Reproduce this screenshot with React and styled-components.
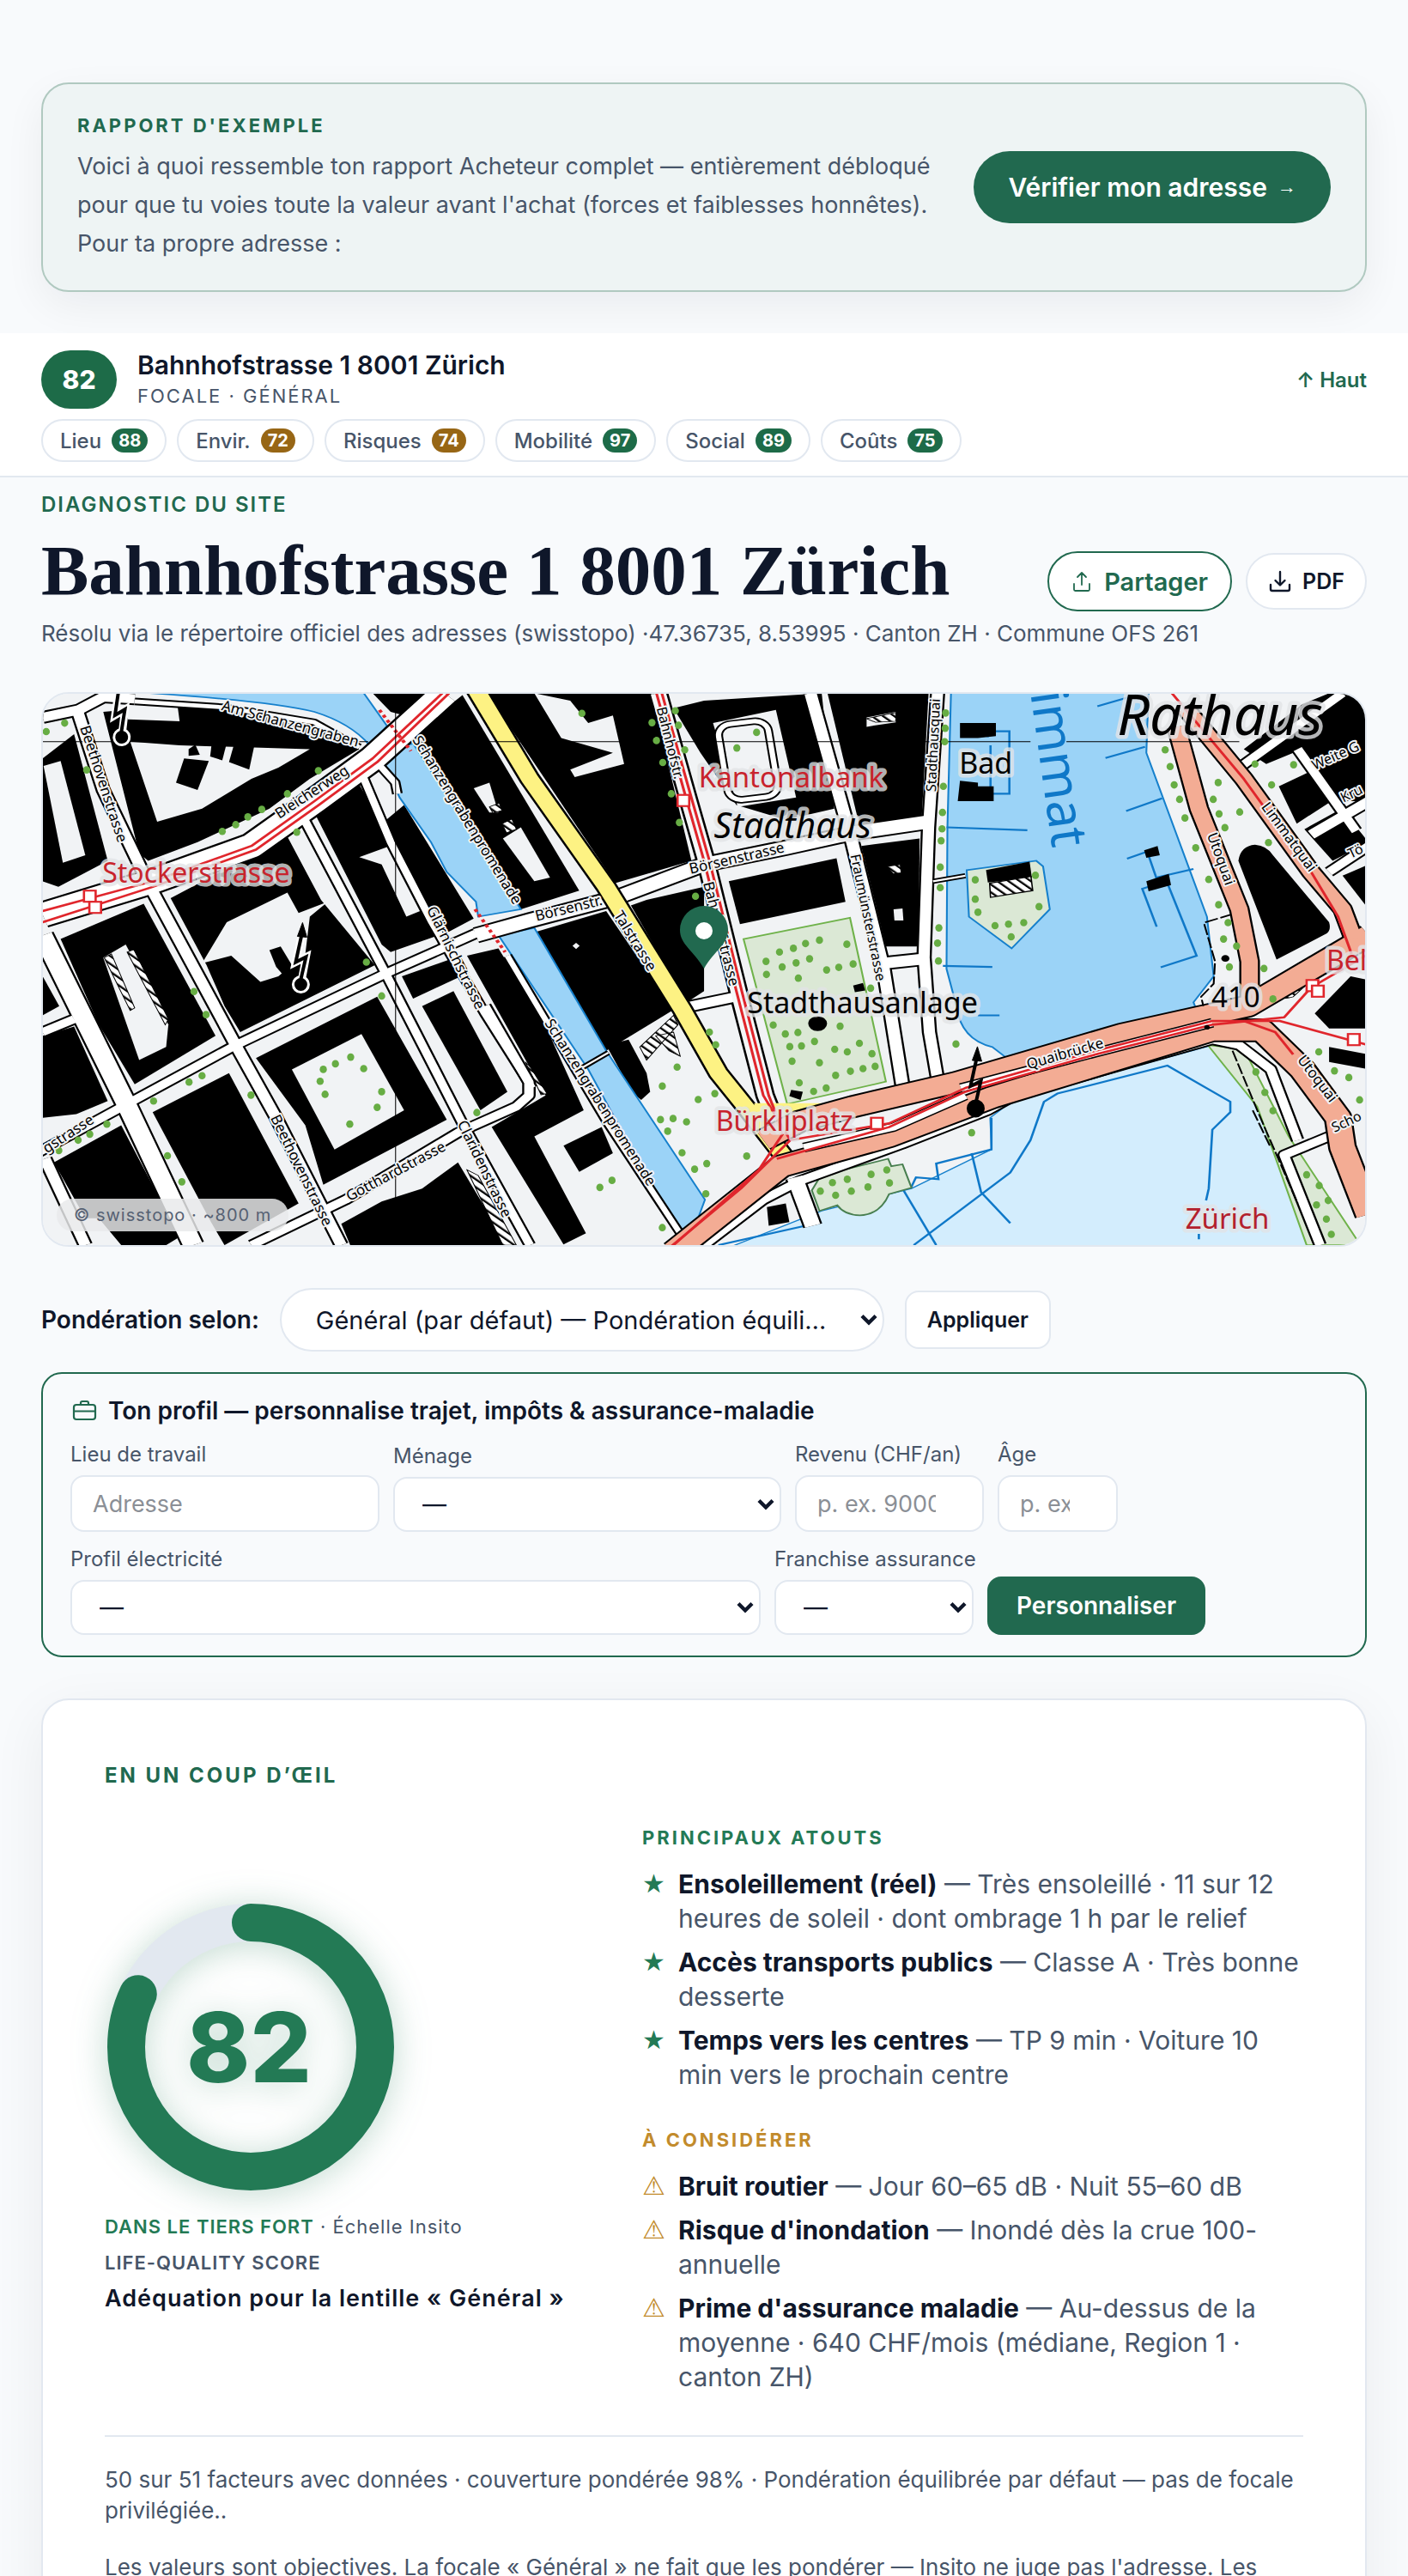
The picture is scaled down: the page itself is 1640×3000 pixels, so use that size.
import React, { useState } from "react";
import styled, { createGlobalStyle } from "styled-components";

const GlobalStyle = createGlobalStyle`
  * {
    box-sizing: border-box;
  }
  body {
    margin: 0;
    background: #f8fafc;
    color: #0f172a;
    font-family: Inter, "Liberation Sans", sans-serif;
  }
  h1, h2, h3, p, ul {
    margin: 0;
    padding: 0;
  }
  button, input, select {
    font-family: inherit;
    margin: 0;
  }
`;

const Page = styled.div`
  height: 100vh;
  overflow: hidden;
  padding-top: 96px;
`;
const Section = styled.section`
  margin: 0 48px;
`;

const Banner = styled(Section)`
  display: flex;
  align-items: center;
  justify-content: space-between;
  gap: 24px;
  padding: 32px 40px;
  border: 2px solid #b0c9c0;
  border-radius: 32px;
  background: #eef4f4;
  box-shadow: 0 16px 48px rgba(15, 23, 42, 0.06);
`;
const Eyebrow = styled.h2`
  color: ${(props) => props.$color || "#21694f"};
  font-size: ${(props) => props.$size || 22}px;
  font-weight: ${(props) => props.$weight || 700};
  line-height: 32px;
  letter-spacing: ${(props) => props.$spacing || 3}px;
  text-transform: uppercase;
`;
const BannerText = styled.p`
  margin-top: 9px;
  color: #475569;
  font-size: 27px;
  line-height: 45px;
`;
const BannerLink = styled.a`
  display: flex;
  flex-shrink: 0;
  align-items: center;
  gap: 12px;
  height: 84px;
  padding: 0 40px;
  border-radius: 42px;
  background: #21694f;
  color: #fff;
  font-size: 30px;
  font-weight: 600;
  text-decoration: none;
`;
const LinkArrow = styled.span`
  font-family: "Liberation Sans", sans-serif;
  font-size: 22px;
`;

const StickyBar = styled.nav`
  margin-top: 48px;
  padding: 20px 48px 16px;
  border-bottom: 2px solid #e2e8f0;
  background: #fff;
`;
const BarTop = styled.div`
  display: flex;
  align-items: center;
  height: 68px;
`;
const BarScore = styled.span`
  width: 88px;
  border-radius: 34px;
  background: #1d6b48;
  color: #fff;
  font-size: 30px;
  font-weight: 800;
  line-height: 68px;
  text-align: center;
`;
const BarInfo = styled.div`
  flex: 1;
  margin-left: 24px;
`;
const BarTitle = styled.div`
  font-size: 30px;
  font-weight: 600;
  line-height: 38px;
`;
const BarFocus = styled.div`
  color: #475569;
  font-size: 22px;
  line-height: 34px;
  letter-spacing: 2px;
  text-transform: uppercase;
`;
const TopLink = styled.a`
  color: #21694f;
  font-size: 24px;
  font-weight: 600;
  text-decoration: none;
`;
const Chips = styled.div`
  display: flex;
  flex-wrap: wrap;
  gap: 12px;
  margin-top: 12px;
`;
const Chip = styled.a`
  display: flex;
  align-items: center;
  gap: 12px;
  height: 50px;
  padding: 0 20px;
  border: 2px solid #e2e8f0;
  border-radius: 25px;
  color: #475569;
  font-size: 24px;
  font-weight: 500;
  text-decoration: none;
`;
const ChipScore = styled.span`
  padding: 0 8px;
  border-radius: 14px;
  background: ${(props) => (props.$mid ? "#976615" : "#1d6b48")};
  color: #fff;
  font-size: 20px;
  font-weight: 700;
  line-height: 28px;
`;

const Header = styled(Section)`
  padding-top: 16px;
`;
const TitleRow = styled.div`
  display: flex;
  align-items: flex-end;
  justify-content: space-between;
  margin-top: 12px;
`;
const Title = styled.h1`
  font-family: "Liberation Serif", serif;
  font-size: 83px;
  font-weight: 700;
  line-height: 96px;
`;
const Actions = styled.div`
  display: flex;
  align-items: center;
  gap: 16px;
`;
const ActionButton = styled.button`
  display: flex;
  align-items: center;
  gap: ${(props) => (props.$primary ? 14 : 12)}px;
  height: ${(props) => (props.$primary ? 70 : 66)}px;
  padding: 0 ${(props) => (props.$primary ? 26 : 24)}px;
  border: 2px solid ${(props) => (props.$primary ? "#21694f" : "#e2e8f0")};
  border-radius: 35px;
  background: #fff;
  color: ${(props) => (props.$primary ? "#21694f" : "#0f172a")};
  font-size: ${(props) => (props.$primary ? 29 : 25)}px;
  font-weight: 600;
  cursor: pointer;
`;
const Resolved = styled.p`
  margin-top: 8px;
  color: #475569;
  font-size: 26px;
  line-height: 36px;
`;

const MapFrame = styled(Section)`
  position: relative;
  margin-top: 50px;
  border: 2px solid #e2e8f0;
  border-radius: 32px;
  overflow: hidden;
`;
const MapSvg = styled.svg`
  display: block;
  width: 100%;
`;
const MapCredit = styled.span`
  position: absolute;
  left: 16px;
  bottom: 16px;
  padding: 0 20px;
  border-radius: 19px;
  background: rgba(232, 233, 235, 0.84);
  color: #566173;
  font-size: 20px;
  line-height: 38px;
  letter-spacing: 1px;
`;

const WeightForm = styled.form`
  display: flex;
  align-items: center;
  gap: 24px;
  margin: 48px 48px 0;
`;
const WeightLabel = styled.label`
  font-size: 28px;
  font-weight: 600;
`;
const SelectWrap = styled.span`
  position: relative;
  display: flex;
  width: ${(props) => props.$width || "100%"};
  svg {
    position: absolute;
    right: 8px;
    top: 50%;
    margin-top: -7px;
    pointer-events: none;
  }
`;
const Select = styled.select`
  appearance: none;
  width: 100%;
  height: ${(props) => (props.$round ? 74 : 64)}px;
  padding: 0 ${(props) => (props.$round ? 60 : 40)}px 0 ${(props) => (props.$round ? 40 : 32)}px;
  border: 2px solid #e2e8f0;
  border-radius: ${(props) => (props.$round ? 37 : 16)}px;
  background: #fff;
  color: #0f172a;
  font-size: ${(props) => (props.$round ? 29 : 28)}px;
  text-overflow: ellipsis;
`;
const Button = styled.button`
  height: 68px;
  padding: 0 ${(props) => (props.$primary ? 34 : 24)}px;
  border: ${(props) => (props.$primary ? "none" : "2px solid #e2e8f0")};
  border-radius: 16px;
  background: ${(props) => (props.$primary ? "#21694f" : "#fff")};
  color: ${(props) => (props.$primary ? "#fff" : "#0f172a")};
  font-size: ${(props) => (props.$primary ? 28 : 25)}px;
  font-weight: 600;
  cursor: pointer;
`;

const Profile = styled.form`
  margin: 24px 48px 0;
  padding: 24px 32px;
  border: 2px solid #21694f;
  border-radius: 24px;
`;
const ProfileTitle = styled.h2`
  display: flex;
  align-items: center;
  gap: 12px;
  font-size: 28px;
  font-weight: 600;
  line-height: 38px;
  svg {
    color: #21694f;
  }
`;
const FieldRow = styled.div`
  display: flex;
  align-items: flex-end;
  gap: 16px;
  margin-top: 16px;
`;
const Field = styled.label`
  display: flex;
  flex-direction: column;
  gap: 8px;
  width: ${(props) => props.$width};
  color: #475569;
  font-size: 24px;
  line-height: 32px;
  white-space: nowrap;
`;
const Input = styled.input`
  width: 100%;
  height: 66px;
  padding: 0 ${(props) => (props.$numeric ? 54 : 24)}px 0 24px;
  border: 2px solid #e2e8f0;
  border-radius: 16px;
  background: #fff;
  color: #0f172a;
  font-size: 27px;
  &::placeholder {
    color: #8b8f96;
  }
`;

const Card = styled(Section)`
  margin-top: 48px;
  padding: 72px;
  border: 2px solid #e2e8f0;
  border-radius: 32px;
  background: #fff;
  box-shadow: 0 16px 64px rgba(15, 23, 42, 0.06);
`;
const Glance = styled.div`
  display: grid;
  grid-template-columns: minmax(0, 546px) 1fr;
  align-items: center;
  gap: 80px;
  margin-top: 40px;
`;
const Ring = styled.svg`
  display: block;
  width: 340px;
  height: 340px;
  margin-bottom: 18px;
  overflow: visible;
  filter: drop-shadow(0 4px 20px rgba(35, 122, 85, 0.28));
`;
const ScoreLine = styled.p`
  color: #475569;
  font-size: ${(props) => (props.$lead ? 27 : 22)}px;
  font-weight: ${(props) => props.$weight || 400};
  line-height: 42px;
  letter-spacing: 1px;
  white-space: nowrap;
  ${(props) => props.$lead && "color: #0f172a;"}
  strong {
    color: #237a55;
    font-weight: 600;
  }
`;
const Factors = styled.ul`
  display: flex;
  flex-direction: column;
  gap: 11px;
  margin: 18px 0 40px;
  list-style: none;
  &:last-child {
    margin-bottom: 0;
  }
`;
const Factor = styled.li`
  display: grid;
  grid-template-columns: 28px 1fr;
  gap: 14px;
  color: #475569;
  font-size: 30px;
  line-height: 40px;
  b {
    color: #0f172a;
    font-weight: 700;
  }
`;
const Mark = styled.span`
  height: 40px;
  color: ${(props) => props.$color};
  font-family: "DejaVu Sans", sans-serif;
  font-weight: 700;
`;
const Footnotes = styled.div`
  display: flex;
  flex-direction: column;
  gap: 30px;
  margin-top: 48px;
  padding-top: 32px;
  border-top: 2px solid #e2e8f0;
  color: #475569;
  font-size: 26px;
  line-height: 36px;
`;

const chips = [
  ["Lieu", 88],
  ["Envir.", 72],
  ["Risques", 74],
  ["Mobilité", 97],
  ["Social", 89],
  ["Coûts", 75, true],
];

const strengths = [
  ["Ensoleillement (réel)", "Très ensoleillé · 11 sur 12 heures de soleil · dont ombrage 1 h par le relief"],
  ["Accès transports publics", "Classe A · Très bonne desserte"],
  ["Temps vers les centres", "TP 9 min · Voiture 10 min vers le prochain centre"],
];

const concerns = [
  ["Bruit routier", "Jour 60–65 dB · Nuit 55–60 dB"],
  ["Risque d'inondation", "Inondé dès la crue 100-annuelle"],
  ["Prime d'assurance maladie", "Au-dessus de la moyenne · 640 CHF/mois (médiane, Region 1 · canton ZH)"],
];

// Map shapes are in survey units, SX and SY bring them to map pixels
const SX = 0.523;
const SY = 0.4337;
const px = (x) => x * SX - 50;
const py = (y) => y * SY - 18;

const blocks = [
  "95,215 165,150 240,490 130,560 95,545",
  "230,90 280,85 285,110 400,115 395,70 560,80 720,120 800,190 690,270 600,350 440,440 330,490 310,470",
  "380,590 640,425 715,595 835,770 535,950 500,880 460,770",
  "700,360 800,285 850,390 900,340 1055,645 1000,680 870,735 850,715",
  "135,700 320,605 480,960 300,1090 220,930",
  "570,1020 840,855 995,1185 720,1360 680,1200",
  "340,1165 510,1060 665,1410 500,1522 470,1460",
  "120,1300 270,1200 400,1500 370,1522 270,1522 220,1450 190,1450",
  "95,960 165,935 240,1135 170,1170 95,1180",
  "95,800 132,880 95,905",
  "1040,745 1110,725 1210,920 1300,1160 1190,1230 1305,1490 1255,1520 1095,1205 1215,1120",
  "940,880 1010,840 1130,1110 1070,1160",
  "895,800 1025,745 1045,790 920,860",
  "830,40 975,40 900,100 870,90",
  "920,150 1030,45 1290,570 1160,620",
  "1085,40 1450,40 1540,490 1370,550",
  "1195,680 1350,625 1500,890 1350,1000",
  "1405,610 1440,595 1568,560 1568,840 1530,870",
  "1350,985 1400,970 1440,1060 1448,1110 1428,1132 1408,1112",
  "760,1465 850,1405 940,1370 1020,1300 1130,1522 780,1522",
  "1255,1255 1340,1205 1365,1275 1290,1325",
  "1500,80 1568,60 1830,40 1858,350 1750,380 1640,340 1560,200",
  "1843,40 2068,40 2053,370 1913,390",
  "1623,545 1863,483 1883,600 1648,660",
  "1918,450 2048,430 2046,720 1973,720",
  "2848,290 2918,250 2978,320 2888,390",
  "2905,405 2988,350 3048,440 2968,490",
  "2990,530 3048,500 3048,620",
  "2770,190 2900,70 2960,40 3048,40 3048,330 2990,330 2900,190 2820,230",
  "2928,900 3008,800 3048,810 3048,940 2960,940",
  "2960,990 3048,1010 3048,1050 2960,1030",
];

const yards = [
  "97,235 135,222 190,475 140,495",
  "290,170 400,180 690,190 620,240 560,270 450,350 350,385",
  "505,655 640,575 665,630 730,600 690,640 680,740 620,800 580,815 515,745 450,765",
  "800,480 880,445 945,620 905,640 850,500",
  "230,750 280,715 375,930 370,990 310,1025",
  "650,1050 805,955 900,1160 745,1265",
  "1120,430 1160,400 1225,535 1190,545",
  "1055,295 1090,280 1110,360 1090,360",
  "1190,40 1270,60 1310,120 1365,100 1390,230 1280,265 1270,245 1365,200 1250,160",
  "1275,718 1283,710 1291,718 1283,727",
  "1588,120 1728,85 1773,320 1643,345",
  "1930,105 1995,90 1995,118 1930,130",
  "1990,620 2010,618 2012,650 1992,650",
];

const smallBlocks = [
  "410,215 465,222 440,300 392,280",
  "475,140 510,150 495,220 468,210",
  "420,190 435,178 445,205 420,208",
  "530,140 570,160 555,245 510,225",
  "600,730 625,720 660,790 640,810 615,775",
];

// Huts and jetties that stand in the water or in the parks
const waterBlocks = [
  "2138,120 2218,120 2218,155 2178,160 2138,160",
  "2138,275 2178,280 2178,290 2213,290 2213,330 2133,330",
  "2548,462 2578,450 2583,475 2553,482",
  "2553,545 2603,525 2608,555 2558,572",
  "1900,825 1922,818 1927,838 1904,843",
  "1762,1105 1788,1110 1783,1132 1758,1122",
  "1708,1420 1750,1410 1758,1460 1712,1470",
];

const streets = [
  [34, "95,105 175,85 230,50 300,55"],
  [20, "300,62 500,78 700,118 800,185"],
  [34, "172,85 230,300 330,550 525,985 615,1180 760,1522"],
  [52, "95,690 280,1140 430,1522"],
  [30, "60,1290 280,1145 525,985 855,795 1060,685"],
  [30, "95,950 165,915"],
  [28, "665,350 860,795 1030,1195 1180,1522"],
  [26, "800,240 870,440 960,650 1080,900 1185,1100"],
  [30, "560,1522 770,1400 1020,1220 1150,1150 1178,1120 1178,1085 1080,880"],
  [44, "1060,690 1180,650 1370,590 1568,500 1750,455 1900,415 2070,385"],
  [24, "820,200 880,280 885,310"],
  [36, "1805,40 1898,440 1968,780 2010,1095"],
  [34, "2088,40 2068,400 2058,750 2070,950 2090,1090"],
  [38, "1968,765 2068,752"],
  [34, "1500,890 1640,855"],
  [14, "2078,545 2150,530"],
  [22, "1130,745 1350,1190 1520,1500"],
  [14, "1290,1050 1355,1005"],
  [34, "100,1290 190,1522"],
  [30, "2760,240 2990,40"],
  [34, "2920,420 3048,330"],
  [30, "2890,190 3020,410"],
  [30, "2960,520 3048,450"],
  [30, "1568,1522 1700,1400 1780,1350 2010,1250 2200,1160 2260,1120 2700,970 2760,985 2830,1050 2890,1240"],
  [30, "2940,1522 2860,1280 2980,1220"],
  [44, "1770,1340 1810,1470"],
];

const orangeRoads = [
  [62, "1700,1240 1780,1190 1900,1150 2130,1085 2500,955 2780,880 3048,690"],
  [64, "1500,1540 1740,1310 1980,1230 2210,1125 2700,945 2810,945 2900,1050 2980,1180 2990,1260 3048,1440"],
  [46, "2620,130 2670,350 2760,620 2783,760 2783,880"],
  [46, "2640,80 2770,270 2920,520 2990,620 3015,700"],
];

const tramLines = [
  "95,625 340,545 560,450 700,330 830,215 985,40",
  "95,655 340,560 570,460 710,340 840,225 1000,40",
  "1462,40 1530,330 1568,490 1640,840 1700,1120 1760,1240 1650,1370 1480,1540",
  "1474,40 1542,330 1580,490 1652,840 1712,1120 1745,1220 1690,1320 1500,1522",
  "1760,1240 1980,1195 2150,1100 2440,1000 2700,920 2850,920 3048,985",
  "1730,1290 1980,1205 2150,1110 2440,1010 2700,930 2860,910 2920,830 3048,740",
  "2610,40 2770,270 2920,520 2980,640 3010,740",
  "2770,920 2840,950 2880,1010",
];

const stops = [
  [200, 585], [212, 615], [1522, 328], [1953, 1195], [2923, 825], [2935, 840], [3015, 970],
];

const trees = [
  [103, 143], [144, 120], [193, 246], [709, 248], [640, 310], [583, 352], [552, 372], [525, 393], [495, 411],
  [661, 413], [432, 841], [459, 903], [816, 762], [850, 853], [450, 1067], [421, 1084], [342, 1135], [559, 1119],
  [238, 1197], [200, 1224], [174, 1240], [131, 1268], [373, 1282], [405, 1352], [781, 1017], [747, 1035],
  [720, 1050], [713, 1082], [724, 1117], [810, 1048], [850, 1110], [840, 1152], [779, 1197], [1062, 1166],
  [1296, 94], [1452, 119], [1462, 167], [1504, 87], [1511, 126], [1525, 192], [1476, 226], [1495, 310], [1513, 387],
  [1549, 585], [1508, 1044], [1475, 1095], [1555, 1131], [1471, 1185], [1499, 1182], [1529, 1191], [1487, 1216],
  [1519, 1274], [1547, 1318], [1363, 1348], [1336, 1367], [1475, 1475], [1685, 145], [1641, 187], [1706, 760],
  [1736, 735], [1767, 725], [1794, 712], [1825, 703], [1886, 714], [1742, 775], [1773, 764], [1803, 753], [1841, 783],
  [1868, 776], [1900, 767], [1707, 795], [1778, 805], [1939, 832], [1722, 931], [1749, 955], [1777, 951], [1871, 934],
  [1759, 989], [1785, 987], [1814, 975], [1764, 1028], [1825, 1032], [1859, 996], [1887, 1003], [1914, 980],
  [1942, 1008], [1949, 1042], [1922, 1048], [1894, 1055], [1861, 1066], [1840, 1100], [1812, 1109], [1780, 1086],
  [2106, 93], [2105, 134], [2104, 170], [2101, 290], [2099, 360], [2098, 404], [2096, 436], [2094, 507], [2094, 562],
  [2091, 670], [2088, 711], [2090, 759], [2129, 982], [2164, 1220], [2172, 541], [2172, 593], [2178, 628],
  [2216, 664], [2246, 660], [2280, 656], [2252, 694], [2314, 613], [2306, 529], [2595, 192], [2606, 237], [2615, 286],
  [2627, 325], [2639, 375], [2663, 455], [2692, 540], [2713, 280], [2702, 325], [2715, 364], [2728, 401], [2761, 359],
  [2795, 230], [2881, 232], [2832, 286], [2825, 441], [2714, 608], [2735, 656], [2725, 700], [2754, 719], [2738, 775],
  [2815, 779], [2835, 861], [2937, 1003], [2972, 1054], [3004, 1072], [3028, 1132], [2797, 1057], [2817, 1112],
  [2835, 1161], [2910, 1333], [2938, 1362], [2958, 1402], [2932, 1414], [2954, 1452], [2965, 1493], [1854, 1354],
  [1887, 1345], [1940, 1332], [1975, 1320], [1827, 1377], [1861, 1388], [1896, 1377], [1933, 1366], [1981, 1355],
  [1580, 950], [1594, 984], [1592, 1115], [1663, 1283], [1574, 1303], [1572, 1384],
];

// text, start x, start y, end x, end y, size
const streetNames = [
  ["Am Schanzengraben", 492, 85, 800, 185, 17],
  ["Beethovenstrasse", 178, 132, 262, 440, 17],
  ["Bleicherweg", 622, 378, 782, 252, 17],
  ["Schanzengrabenpromenade", 918, 165, 1142, 605, 17],
  ["Börsenstr.", 1195, 652, 1335, 610, 17],
  ["Talstrasse", 1366, 635, 1440, 780, 17],
  ["Glärnischstrasse", 950, 620, 1060, 890, 17],
  ["Schanzengrabenpromenade", 1212, 925, 1448, 1375, 17],
  ["Beethovenstrasse", 602, 1180, 722, 1475, 17],
  ["Gotthardstrasse", 778, 1405, 985, 1272, 17],
  ["Claridenstrasse", 1018, 1195, 1120, 1450, 17],
  ["gstrasse", 104, 1276, 195, 1205, 17],
  ["Bahnhofstr.", 1462, 80, 1505, 285, 16],
  ["Bahnhofstrasse", 1566, 550, 1626, 832, 17],
  ["Börsenstrasse", 1538, 525, 1742, 468, 17],
  ["Fraumünsterstrasse", 1894, 475, 1952, 815, 16],
  ["Stadthausquai", 2084, 305, 2094, 50, 16],
  ["Quaibrücke", 2290, 1050, 2455, 992, 17],
  ["Utoquai", 2688, 420, 2730, 560, 17],
  ["Limmatquai", 2808, 345, 2915, 520, 17],
  ["Utoquai", 2888, 1025, 2965, 1145, 17],
  ["Weite G", 2928, 247, 3038, 187, 16],
  ["Kru", 2992, 334, 3042, 304, 16],
  ["Tö", 3008, 484, 3043, 464, 16],
  ["Scho", 2972, 1220, 3042, 1180, 16],
];

// text, x, y, size, colour, style
const placeNames = [
  ["Stockerstrasse", 228, 549, 32, "#c8232c"],
  ["Kantonalbank", 1556, 292, 33, "#c8232c"],
  ["Bürkliplatz", 1594, 1216, 32, "#c8232c"],
  ["Bel", 2954, 784, 32, "#c8232c"],
  ["Zürich", 2640, 1478, 33, "#b3202c"],
  ["Stadthaus", 1590, 430, 41, "#000", "italic"],
  ["Rathaus", 2488, 152, 66, "#000", "italic"],
  ["Stadthausanlage", 1664, 900, 34, "#000"],
  ["Bad", 2136, 256, 34, "#000"],
  ["410", 2698, 882, 33, "#000"],
];

function Bolt({ x, y, rotate = 0, hollow }) {
  return (
    <g
      transform={`translate(${px(x)} ${py(y)}) rotate(${rotate})`}
      stroke="#000"
      strokeWidth="4"
    >
      <path d="M0 0 6-32-6-26 1-58" fill="none" stroke={hollow ? "#fff" : "none"} strokeWidth="9" />
      <circle r="9" fill="#000" stroke={hollow ? "#fff" : "#000"} strokeWidth="3" />
      <path d="M0-6 6-32-6-26 1-58" fill="none" />
      <path d="M-4-56 2-72 7-55z" fill="#000" strokeWidth="1" />
    </g>
  );
}

function SiteMap() {
  return (
    <MapSvg viewBox="0 0 1540 642" role="img" aria-label="Carte du site">
      <defs>
        <pattern id="hatch" width="16" height="16" patternUnits="userSpaceOnUse" patternTransform="rotate(-50)">
          <rect width="16" height="16" fill="#fff" />
          <rect width="5" height="16" fill="#000" />
        </pattern>
      </defs>
      <rect width="1540" height="642" fill="#f1f3f5" />
      <g transform={`translate(-50 -18) scale(${SX} ${SY})`}>
        {blocks.map((points) => (
          <polygon key={points} points={points} fill="#000" />
        ))}
        {yards.map((points) => (
          <polygon key={points} points={points} fill="#f1f3f5" />
        ))}
        {smallBlocks.map((points) => (
          <polygon key={points} points={points} fill="#000" />
        ))}
        <path d="M2758 490Q2763 450 2795 447 2822 450 2835 475L2960 655Q2965 675 2955 685L2843 755z" fill="#000" />
        <g fill="url(#hatch)" stroke="#000" strokeWidth="2">
          <path d="M232 750 248 740 300 885 290 892zM283 735 298 728 375 915 368 930z" />
          <path d="M1090 345 1112 335 1118 355 1098 362zM1118 390 1140 378 1150 405 1128 415z" />
          <path d="M1425 990 1500 905 1510 930 1440 1025zM1460 960 1500 950 1515 1015 1490 1000z" />
          <path d="M1040 1320 1065 1335 1150 1522 1120 1522z" />
          <path d="M1170 1030 1182 1045 1218 1115 1205 1118z" />
          <path d="M2845 850Q2850 815 2935 780L2930 800 2880 855Q2855 865 2845 850z" />
          <path d="M1930 108 1995 92 1995 115 1950 118zM1975 505 2005 500 2007 522 1990 525z" />
        </g>

        <g fill="#9bd3f7" stroke="#1680cc" strokeWidth="4">
          <path d="M290 36Q600 60 700 90 780 120 822 178L862 128 808 36z" />
          <path d="M845 200 920 175 1160 620 1065 640 1060 600 995 520 960 440 890 320z" />
          <path d="M1110 690 1190 670 1350 1000 1570 1400 1530 1530 1500 1470 1310 1050z" />
          <path d="M2118 36H2558L2553 200 2688 640 2703 800 2658 870 2668 900 2248 1025 2210 990Q2140 970 2130 880L2108 780 2110 400z" />
        </g>
        <path
          d="M1620 1530 1830 1430 2030 1370 2208 1265 2205 1180 2260 1130 2700 985 2790 1080 2920 1530z"
          fill="#d3edfd"
          stroke="#1680cc"
          strokeWidth="3"
        />
        <g fill="none" stroke="#0f78c8" strokeWidth="5">
          <path d="M2108 400 2288 408M2100 772 2210 775M2178 905H2226M2444 75 2530 45M2462 214 2550 184M2508 356 2588 322M2510 484 2555 465 2575 535 2658 512M2600 550 2665 745 2585 776M2576 667 2544 565 2570 555" />
          <path d="M2250 1463 2185 1380 2164 1275M2035 1522 2250 1327 2295 1240 2325 1137 2355 1115 2600 1040 2740 1137V1165L2700 1212 2692 1370 2686 1402M2670 1492V1506M2085 1522 2010 1370M1600 1522 1830 1460" />
          <path d="M2028 1370 2040 1340 2090 1345 2085 1303 2208 1265V1180M2200 158V142H2248V310H2206V180" />
        </g>
        <g fill="#dbe8d5" stroke="#6fb24a" strokeWidth="4">
          <path d="M1656 700 1893 643 1973 1083 1753 1143z" />
          <path d="M2153 515 2308 490 2323 505 2338 620 2253 725 2158 640z" stroke="#1680cc" />
          <path d="M1828 1335 1978 1290 1985 1310 2010 1305 2030 1368 1980 1385Q1960 1440 1915 1442 1880 1440 1865 1415L1825 1430 1808 1375z" stroke="#487f50" />
          <path d="M2690 985 2770 995 2870 1230 3030 1522 2910 1522 2800 1150z" />
        </g>
        <path d="M2196 515 2293 492 2298 535 2200 548z" fill="#000" />
        <path d="M2204 550 2296 532 2300 570 2206 588z" fill="url(#hatch)" stroke="#000" strokeWidth="3" />
        <ellipse cx="1821" cy="927" rx="21" ry="20" fill="#000" />
        {waterBlocks.map((points) => (
          <polygon key={points} points={points} fill="#000" />
        ))}

        <g fill="none" strokeLinejoin="round">
          {streets.map(([width, points]) => (
            <polyline key={points} points={points} stroke="#000" strokeWidth={width} />
          ))}
          <polyline points="95,635 340,545 560,450 700,330 830,215 990,40" stroke="#000" strokeWidth="72" />
          <polyline points="1466,40 1534,330 1572,490 1644,840 1704,1120 1740,1230" stroke="#000" strokeWidth="44" />
          {streets.map(([width, points]) => (
            <polyline key={points} points={points} stroke="#fff" strokeWidth={width - 9} />
          ))}
          <polyline points="95,635 340,545 560,450 700,330 830,215 990,40" stroke="#fff" strokeWidth="62" />
          <polyline points="1466,40 1534,330 1572,490 1644,840 1704,1120 1740,1230" stroke="#f6f7f8" strokeWidth="34" />
          <rect x="1610" y="118" width="112" height="205" rx="30" transform="rotate(-8 1666 220)" stroke="#000" strokeWidth="20" />
          <rect x="1610" y="118" width="112" height="205" rx="30" transform="rotate(-8 1666 220)" stroke="#fff" strokeWidth="12" />
          <path d="M1060 30 1180 270 1350 560 1520 890 1600 1060 1660 1150 1750 1290" stroke="#000" strokeWidth="48" />
          <path d="M1060 30 1180 270 1350 560 1520 890 1600 1060 1660 1150 1750 1290M1680 1160 1830 1160" stroke="#fdf283" strokeWidth="38" />
          {orangeRoads.map(([width, points]) => (
            <polyline key={points} points={points} stroke="#000" strokeWidth={width} />
          ))}
          {orangeRoads.map(([width, points]) => (
            <polyline key={points} points={points} stroke="#f3ac94" strokeWidth={width - 9} />
          ))}
          <path d="M1790 1260 1990 1205 2150 1120M2140 1100 2440 1005 2700 925" stroke="#000" strokeWidth="26" />
          <path d="M1790 1260 1990 1205 2150 1120M2140 1100 2440 1005 2700 925" stroke="#fff" strokeWidth="19" />
          {tramLines.map((points) => (
            <polyline key={points} points={points} stroke="#e0262c" strokeWidth="6" />
          ))}
          <path d="M845 85 915 195M1058 620 1125 735" stroke="#e0262c" strokeWidth="8" strokeDasharray="8 8" />
          <path d="M2684 655 2740 635M2682 660 2706 760 2703 820 2675 855 2680 880M2745 1000 2800 1160 2890 1410M2790 1160 2830 1260" stroke="#000" strokeWidth="4" strokeDasharray="30 6" />
          <path d="M95 170H820M1010 170H2295M2375 170H2760M881 40V1400" stroke="#000" strokeWidth="2" />
        </g>
        <ellipse cx="2729" cy="752" rx="9" ry="9" fill="#000" />
        <ellipse cx="2688" cy="937" rx="6" ry="6" fill="#000" />
        {trees.map(([x, y]) => (
          <ellipse key={`${x}-${y}`} cx={x} cy={y} rx="8" ry="10" fill="#67ad44" />
        ))}
        {stops.map(([x, y]) => (
          <rect key={`${x}-${y}`} x={x - 13} y={y - 15} width="26" height="30" fill="#fff" stroke="#e0262c" strokeWidth="5" />
        ))}
      </g>
      <g fontFamily='"Noto Sans", sans-serif' paintOrder="stroke" strokeLinejoin="round">
        {streetNames.map(([name, x1, y1, x2, y2, size]) => {
          const angle = (Math.atan2(py(y2) - py(y1), px(x2) - px(x1)) * 180) / Math.PI;
          return (
            <text
              key={name + x1}
              transform={`translate(${px(x1)} ${py(y1)}) rotate(${angle})`}
              fontSize={size}
              stroke="#f1f3f5"
              strokeWidth="4"
            >
              {name}
            </text>
          );
        })}
        {placeNames.map(([name, x, y, size, color, style]) => (
          <text
            key={name}
            x={px(x)}
            y={py(y)}
            fontSize={size}
            fontStyle={style}
            fill={color}
            stroke="rgba(226, 228, 230, .8)"
            strokeWidth="9"
          >
            {name}
          </text>
        ))}
        <text
          transform={`translate(${px(2295)} ${py(40)}) rotate(82)`}
          fontSize="60"
          fill="#0f78c8"
        >
          immat
        </text>
      </g>
      <Bolt x={271} y={158} rotate={-4} hollow />
      <Bolt x={670} y={822} hollow />
      <Bolt x={2173} y={1155} />
      <path
        d="M770 320C758 299 742 292 742 275A28 28 0 1 1 798 275C798 292 782 299 770 320z"
        fill="#21694f"
      />
      <circle cx="770" cy="276" r="10" fill="#fff" />
    </MapSvg>
  );
}

function Chevron() {
  return (
    <svg width="20" height="14" viewBox="0 0 20 14" aria-hidden="true">
      <path d="M2 2.5 10 10.5 18 2.5" fill="none" stroke="#0f172a" strokeWidth="4.4" />
    </svg>
  );
}

function ShareIcon() {
  return (
    <svg width="24" height="24" viewBox="0 0 24 24" fill="none" stroke="currentColor" strokeWidth="1.8" strokeLinecap="round" strokeLinejoin="round">
      <path d="M12 16V2M7 7l5-5 5 5M3 15v6.500a1.500 1.500 0 0 0 1.500 1.500h15a1.500 1.500 0 0 0 1.500-1.500V15" />
    </svg>
  );
}

function DownloadIcon() {
  return (
    <svg width="28" height="28" viewBox="0 0 28 28" fill="none" stroke="currentColor" strokeWidth="2.400" strokeLinecap="round" strokeLinejoin="round">
      <path d="M14 3v15M8.500 13l5.500 5.500 5.500-5.500M3 18v5a2 2 0 0 0 2 2h18a2 2 0 0 0 2-2v-5" />
    </svg>
  );
}

function BriefcaseIcon() {
  return (
    <svg width="32" height="28" viewBox="0 0 32 28" fill="none" stroke="currentColor" strokeWidth="2.200" strokeLinejoin="round">
      <rect x="4" y="7" width="25" height="17" rx="3" />
      <path d="M12 7V5a2 2 0 0 1 2-2h5a2 2 0 0 1 2 2v2M4 14.500h25" />
    </svg>
  );
}

function ScoreRing({ score }) {
  return (
    <Ring viewBox="0 0 340 340" role="img" aria-label={`Score ${score}`}>
      <circle cx="170" cy="170" r="145" fill="none" stroke="#e2e8f0" strokeWidth="44" />
      <circle
        cx="170"
        cy="170"
        r="145"
        fill="none"
        stroke="#237a55"
        strokeWidth="44"
        strokeLinecap="round"
        pathLength="100"
        strokeDasharray={`${score} 100`}
        transform="rotate(-90 170 170)"
      />
      <text
        x="168"
        y="211"
        textAnchor="middle"
        fontFamily="Inter, sans-serif"
        fontSize="112"
        fontWeight="800"
        fill="#237a55"
      >
        {score}
      </text>
    </Ring>
  );
}

function FactorList({ items, mark, color }) {
  return (
    <Factors>
      {items.map(([name, text]) => (
        <Factor key={name}>
          <Mark $color={color}>{mark}</Mark>
          <span>
            <b>{name}</b> — {text}
          </span>
        </Factor>
      ))}
    </Factors>
  );
}

export default function App() {
  const [focus, setFocus] = useState("general");
  const stop = (e) => e.preventDefault();

  return (
    <Page>
      <GlobalStyle />
      <Banner>
        <div>
          <Eyebrow>Rapport d'exemple</Eyebrow>
          <BannerText>
            Voici à quoi ressemble ton rapport Acheteur complet — entièrement débloqué pour que tu voies toute la
            valeur avant l'achat (forces et faiblesses honnêtes). Pour ta propre adresse :
          </BannerText>
        </div>
        <BannerLink href="#verifier">
          Vérifier mon adresse <LinkArrow>→</LinkArrow>
        </BannerLink>
      </Banner>

      <StickyBar>
        <BarTop>
          <BarScore>82</BarScore>
          <BarInfo>
            <BarTitle>Bahnhofstrasse 1 8001 Zürich</BarTitle>
            <BarFocus>Focale · Général</BarFocus>
          </BarInfo>
          <TopLink href="#haut">↑ Haut</TopLink>
        </BarTop>
        <Chips>
          {chips.map(([name, score, good]) => (
            <Chip key={name} href={`#${name}`}>
              {name}
              <ChipScore $mid={score < 80 && !good}>{score}</ChipScore>
            </Chip>
          ))}
        </Chips>
      </StickyBar>

      <Header>
        <Eyebrow as="p" $size={24} $weight={600} $spacing={2}>
          Diagnostic du site
        </Eyebrow>
        <TitleRow>
          <Title>Bahnhofstrasse 1 8001 Zürich</Title>
          <Actions>
            <ActionButton $primary type="button">
              <ShareIcon />
              Partager
            </ActionButton>
            <ActionButton type="button">
              <DownloadIcon />
              PDF
            </ActionButton>
          </Actions>
        </TitleRow>
        <Resolved>
          Résolu via le répertoire officiel des adresses (swisstopo) ·47.36735, 8.53995 · Canton ZH · Commune OFS 261
        </Resolved>
      </Header>

      <MapFrame>
        <SiteMap />
        <MapCredit>© swisstopo · ~800 m</MapCredit>
      </MapFrame>

      <WeightForm onSubmit={stop}>
        <WeightLabel htmlFor="focus">Pondération selon:</WeightLabel>
        <SelectWrap $width="704px">
          <Select $round id="focus" value={focus} onChange={(e) => setFocus(e.target.value)}>
            <option value="general">Général (par défaut) — Pondération équilibrée par défaut</option>
          </Select>
          <Chevron />
        </SelectWrap>
        <Button type="submit">Appliquer</Button>
      </WeightForm>

      <Profile onSubmit={stop}>
        <ProfileTitle>
          <BriefcaseIcon />
          Ton profil — personnalise trajet, impôts & assurance-maladie
        </ProfileTitle>
        <FieldRow>
          <Field $width="360px">
            Lieu de travail
            <Input placeholder="Adresse" />
          </Field>
          <Field $width="452px">
            Ménage
            <SelectWrap>
              <Select>
                <option>—</option>
              </Select>
              <Chevron />
            </SelectWrap>
          </Field>
          <Field $width="220px">
            Revenu (CHF/an)
            <Input $numeric inputMode="numeric" placeholder="p. ex. 90000" />
          </Field>
          <Field $width="140px">
            Âge
            <Input $numeric inputMode="numeric" placeholder="p. ex. 40" />
          </Field>
        </FieldRow>
        <FieldRow>
          <Field $width="804px">
            Profil électricité
            <SelectWrap>
              <Select>
                <option>—</option>
              </Select>
              <Chevron />
            </SelectWrap>
          </Field>
          <Field $width="232px">
            Franchise assurance
            <SelectWrap>
              <Select>
                <option>—</option>
              </Select>
              <Chevron />
            </SelectWrap>
          </Field>
          <Button $primary type="submit">
            Personnaliser
          </Button>
        </FieldRow>
      </Profile>

      <Card>
        <Eyebrow $size={24}>En un coup d’œil</Eyebrow>
        <Glance>
          <div>
            <ScoreRing score={82} />
            <ScoreLine>
              <strong>DANS LE TIERS FORT</strong> · Échelle Insito
            </ScoreLine>
            <ScoreLine $weight={600}>LIFE-QUALITY SCORE</ScoreLine>
            <ScoreLine $lead $weight={600}>
              Adéquation pour la lentille « Général »
            </ScoreLine>
          </div>
          <div>
            <Eyebrow as="h3" $color="#237a55">
              Principaux atouts
            </Eyebrow>
            <FactorList items={strengths} mark="★" color="#237a55" />
            <Eyebrow as="h3" $color="#c28b2c">
              À considérer
            </Eyebrow>
            <FactorList items={concerns} mark="⚠" color="#c28b2c" />
          </div>
        </Glance>
        <Footnotes>
          <p>
            50 sur 51 facteurs avec données · couverture pondérée 98% · Pondération équilibrée par défaut — pas de
            focale privilégiée..
          </p>
          <p>
            Les valeurs sont objectives. La focale « Général » ne fait que les pondérer — Insito ne juge pas
            l'adresse. Les
          </p>
        </Footnotes>
      </Card>
    </Page>
  );
}
